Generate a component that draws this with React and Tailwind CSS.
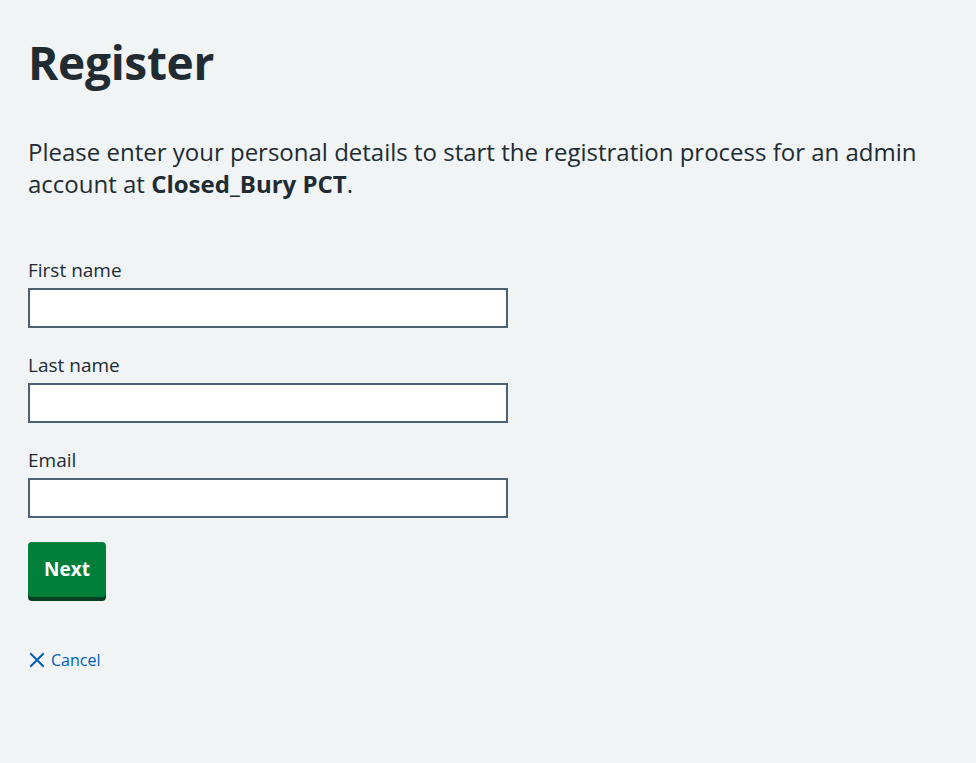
function Field({label}){
  return (
    <div className="mb-6 flex flex-col">
      <label className="text-[19px] leading-[27px] mb-1 text-[#212b32]">{label}</label>
      <input type="text" className="w-[480px] h-10 border-2 border-[#4c6272] bg-white px-2 outline-none" />
    </div>
  );
}

export default function App(){
  return (
    <div className="min-h-screen bg-[#f0f4f5] text-[#212b32] font-['Open_Sans',sans-serif] px-7 pt-[34px]">
      <h1 className="text-[46px] font-bold leading-[56px] mb-[46px] tracking-[-0.3px]">Register</h1>
      <p className="text-[24px] leading-[32px] mb-[57px] max-w-[900px]">
        Please enter your personal details to start the registration process for an admin account at <strong className="font-bold">Closed_Bury PCT</strong>.
      </p>
      <form className="flex flex-col items-start">
        <Field label="First name" />
        <Field label="Last name" />
        <Field label="Email" />
        <button type="button" className="h-[55px] w-[78px] rounded-[4px] bg-[#007f3b] text-white text-[19px] font-bold shadow-[0_4px_0_#00401e] flex items-center justify-center">Next</button>
      </form>
      <a href="#" className="mt-[51px] inline-flex items-center gap-[5px] text-[#005eb8] text-[16px] leading-6">
        <svg width="18" height="18" viewBox="0 0 18 18" fill="none" stroke="#005eb8" strokeWidth="2" strokeLinecap="square">
          <path d="M3 3 L15 15 M15 3 L3 15" />
        </svg>
        Cancel
      </a>
    </div>
  );
}
